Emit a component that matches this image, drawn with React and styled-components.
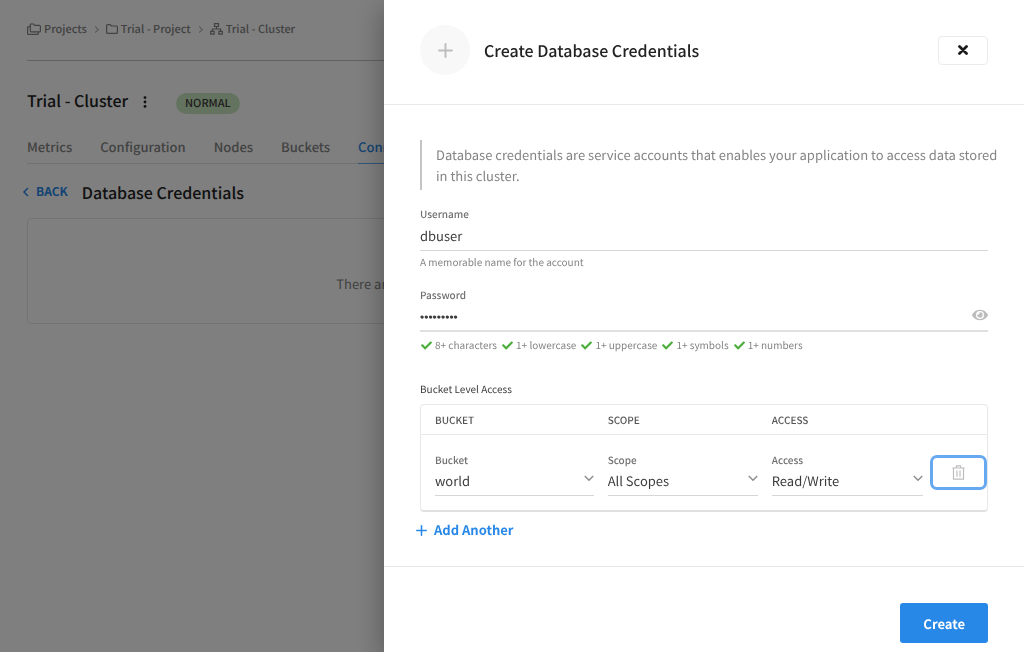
import { useState } from 'react';
import styled, { createGlobalStyle, ThemeProvider } from 'styled-components';
import { FaCheck, FaEye } from 'react-icons/fa';

const theme = {
  blue: '#2888e8',
  ring: '#67a9f0',
  green: '#4caf3c',
  heading: '#222222',
  text: '#3c3c3c',
  label: '#707070',
  muted: '#848484',
  line: '#e8e8e8',
  badge: '#c9e6bf',
}

const GlobalStyle = createGlobalStyle`
* {
  box-sizing: border-box;
}
body {
  margin: 0;
  background: #ffffff;
}
body, button, input, select {
  font-family: 'Noto Sans CJK SC', 'Open Sans', sans-serif;
  text-rendering: geometricPrecision;
}
`;

const ProjectsIcon = () => (
  <svg width="14" height="12" viewBox="0 0 14 12" fill="none" stroke="currentColor" strokeWidth="1.200" strokeLinejoin="round" aria-hidden="true">
    <path d="M3.5 1h3l1.2 1.3h4.6c.7 0 1.1.4 1.1 1v4.6c0 .6-.4 1-1 1H4.300c-.6 0-1-.4-1-1V1.600z" />
    <path d="M3.300 3.700H1.600c-.6 0-1 .4-1 1v5.700c0 .6.4 1 1 1h8.700c.6 0 1-.4 1-1V9" />
  </svg>
);

const FolderIcon = () => (
  <svg width="12" height="10" viewBox="0 0 12 10" fill="none" stroke="currentColor" strokeWidth="1.200" strokeLinejoin="round" aria-hidden="true">
    <path d="M.6 1.600c0-.6.4-1 1-1h2.600l1.300 1.400h4.900c.6 0 1 .4 1 1v5.400c0 .6-.4 1-1 1H1.600c-.6 0-1-.4-1-1z" />
  </svg>
);

const ClusterIcon = () => (
  <svg width="13" height="12" viewBox="0 0 13 12" fill="none" stroke="currentColor" strokeWidth="1.200" aria-hidden="true">
    <path d="M4.500.700h4v2.800h-4zM.700 8.400h3.400v2.700H.700zM8.900 8.400h3.400v2.700H8.900zM6.500 3.600v2.300M2.400 8.300V6h8.200v2.300" />
  </svg>
);

const Chevron = ({ dir, size = 10, weight = 1.5 }) => {
  const paths = { left: 'M7 1 3 5l4 4', right: 'M3.500 1.500 7 5 3.500 8.500', down: 'M.8 3 5 7.200 9.200 3' };
  return (
    <svg width={size} height={size} viewBox="0 0 10 10" fill="none" stroke="currentColor" strokeWidth={weight} aria-hidden="true">
      <path d={paths[dir]} />
    </svg>
  );
};

const PlusIcon = ({ size, weight }) => (
  <svg width={size} height={size} viewBox="0 0 14 14" fill="none" stroke="currentColor" strokeWidth={weight} strokeLinecap="round" aria-hidden="true">
    <path d="M7 1v12M1 7h12" />
  </svg>
);

const CloseIcon = () => (
  <svg width="10" height="10" viewBox="0 0 10 10" fill="none" stroke="currentColor" strokeWidth="2.800" strokeLinecap="round" aria-hidden="true">
    <path d="M1.500 1.500l7 7M8.500 1.500l-7 7" />
  </svg>
);

const TrashIcon = () => (
  <svg width="13" height="15" viewBox="0 0 13 15" fill="none" stroke="currentColor" strokeWidth="1.200" aria-hidden="true">
    <path d="M.300 3h12.400M4 2.800 4.600.900h3.800L9 2.800M1.500 3v11.200h10V3M5 5.500v6.200M8 5.500v6.200" />
  </svg>
);

const DotsIcon = () => (
  <svg width="4" height="12" viewBox="0 0 4 12" fill="currentColor" aria-hidden="true">
    <circle cx="2" cy="1.600" r="1.400" />
    <circle cx="2" cy="6" r="1.400" />
    <circle cx="2" cy="10.400" r="1.400" />
  </svg>
);

const Page = styled.main`
  min-height: 100vh;
  padding: 0 27px;
`;

const Breadcrumbs = styled.nav`
  display: flex;
  align-items: center;
  gap: 5px;
  height: 61px;
  padding-bottom: 2px;
  border-bottom: 1px solid #c4c4c4;
  color: #b0b0b0;

  a {
    display: flex;
    align-items: center;
    gap: 3px;
    color: ${props => props.theme.muted};
    font-size: 11px;
    font-weight: 500;
    line-height: 16px;
    text-decoration: none;
  }
`;

const ClusterHeader = styled.div`
  display: flex;
  align-items: center;
  gap: 15px;
  padding-top: 27px;

  h1 {
    margin: 0;
    padding-bottom: 3px;
    color: ${props => props.theme.heading};
    font-size: 16px;
    font-weight: 500;
    line-height: 24px;
  }
`;

const IconButton = styled.button`
  display: flex;
  padding: 0;
  border: 0;
  background: none;
  color: ${props => props.$color || props.theme.heading};
  cursor: pointer;
`;

const Badge = styled.span`
  margin: 3px 0 0 14px;
  padding: 0 9px;
  border-radius: 11px;
  background: ${props => props.theme.badge};
  color: ${props => props.theme.text};
  font-size: 11px;
  font-weight: 500;
  line-height: 21px;
`;

const Tabs = styled.nav`
  display: flex;
  gap: 28px;
  margin-top: 20px;
  border-bottom: 1px solid #e0e0e0;
`;

const Tab = styled.a`
  margin-bottom: -1px;
  padding-bottom: 4px;
  border-bottom: 1px solid ${props => props.$active ? props.theme.ring : 'transparent'};
  color: ${props => props.$active ? props.theme.blue : props.theme.muted};
  font-size: 13px;
  font-weight: 500;
  line-height: 24px;
  text-decoration: none;
`;

const SectionHeader = styled.div`
  display: flex;
  align-items: center;
  gap: 14px;
  margin: 16px 0 14px -6px;

  a {
    display: flex;
    align-items: center;
    gap: 5px;
    color: ${props => props.theme.blue};
    font-size: 12px;
    font-weight: 700;
    line-height: 24px;
    text-decoration: none;
  }
  h2 {
    margin: 0;
    color: ${props => props.theme.heading};
    font-size: 16px;
    font-weight: 500;
    line-height: 24px;
  }
`;

const EmptyCard = styled.p`
  margin: 0;
  padding: 52px 24px 26px;
  border: 1px solid #e6e6e6;
  border-radius: 4px;
  color: ${props => props.theme.muted};
  font-size: 13px;
  line-height: 26px;
  text-align: center;
`;

const Overlay = styled.div`
  position: fixed;
  inset: 0;
  display: flex;
  justify-content: flex-end;
  background: rgba(0, 0, 0, 0.5);
`;

const Drawer = styled.section`
  display: flex;
  flex-direction: column;
  width: 62.5%;
  min-width: 480px;
  overflow: hidden auto;
  background: #ffffff;
  box-shadow: 0 8px 28px rgba(0, 0, 0, 0.35);
`;

const DrawerHeader = styled.header`
  display: flex;
  align-items: center;
  gap: 14px;
  padding: 25px 36px 29px;
  border-bottom: 1px solid ${props => props.theme.line};

  h2 {
    flex: 1;
    margin: 0;
    color: ${props => props.theme.heading};
    font-size: 16px;
    font-weight: 500;
    line-height: 24px;
  }
`;

const Circle = styled.span`
  display: flex;
  align-items: center;
  justify-content: center;
  width: 50px;
  height: 50px;
  border-radius: 50%;
  background: #f8f8f8;
  color: #bdbdbd;
`;

const CloseButton = styled.button`
  display: flex;
  align-items: center;
  justify-content: center;
  width: 50px;
  height: 29px;
  padding: 0;
  border: 1px solid #ebebeb;
  border-radius: 4px;
  background: #ffffff;
  color: #1c1c1c;
  cursor: pointer;
`;

const Form = styled.form`
  display: flex;
  flex: 1;
  flex-direction: column;
`;

const FormBody = styled.div`
  flex: 1;
  padding: 35px 36px 24px;
`;

const Note = styled.p`
  margin: 0 -14px 16px 0;
  padding: 4px 0 4px 14px;
  border-left: 2px solid #c4c4c4;
  color: ${props => props.theme.muted};
  font-size: 13px;
  line-height: 21px;
`;

const Field = styled.div`
  margin-bottom: ${props => props.$gap || 0}px;
`;

const Label = styled.label`
  display: block;
  color: ${props => props.theme.label};
  font-size: 10px;
  font-weight: 500;
  line-height: 16px;
`;

const InputRow = styled.div`
  display: flex;
  align-items: center;
  height: 29px;
  padding-bottom: ${props => props.$thick ? 0 : 2}px;
  border-bottom: ${props => props.$thick ? 2 : 1}px solid ${props => props.$thick ? '#e0e0e0' : '#d6d6d6'};

  button {
    padding-bottom: 4px;
  }
`;

const Input = styled.input`
  flex: 1;
  min-width: 0;
  height: 24px;
  padding: 0;
  border: 0;
  outline: 0;
  background: none;
  color: ${props => props.theme.text};
  font-size: 13px;

  &[type='password'] {
    font-family: 'Liberation Sans', sans-serif;
    font-size: 12px;
  }
`;

const Hint = styled.p`
  margin: 3px 0 0;
  color: ${props => props.theme.muted};
  font-size: 10px;
  line-height: 16px;
`;

const Rules = styled.ul`
  display: flex;
  flex-wrap: wrap;
  gap: 5px;
  margin: 5px 0 28px;
  padding: 0 1px;
  list-style: none;
  color: ${props => props.theme.muted};
  font-size: 10px;
  line-height: 16px;

  li {
    display: flex;
    align-items: center;
    gap: 3px;
  }
  svg {
    color: ${props => props.theme.green};
  }
`;

const TableTitle = styled.h3`
  margin: 0 0 7px;
  color: ${props => props.theme.text};
  font-size: 10px;
  font-weight: 400;
  line-height: 16px;
`;

const AccessTable = styled.table`
  width: 100%;
  table-layout: fixed;
  border: 1px solid #e8e8e8;
  border-bottom: 2px solid #e0e0e0;
  border-radius: 4px;
  border-spacing: 0;

  th {
    height: 30px;
    padding: 0 0 0 14px;
    border-bottom: 1px solid ${props => props.theme.line};
    color: #555555;
    font-size: 10px;
    font-weight: 500;
    line-height: 16px;
    text-align: left;
    text-transform: uppercase;
  }
  td {
    padding: 17px 0 14px 14px;
    vertical-align: top;
  }
  td:last-child {
    padding: 20px 0 0 7px;
  }
`;

const SelectBox = styled.div`
  position: relative;
  border-bottom: 1px solid #d6d6d6;

  svg {
    position: absolute;
    top: 5px;
    right: 0;
    color: #8c8c8c;
    pointer-events: none;
  }
`;

const Select = styled.select`
  display: block;
  width: 100%;
  height: 27px;
  padding: 0 14px 2px 0;
  border: 0;
  outline: 0;
  appearance: none;
  background: none;
  color: ${props => props.theme.text};
  font-size: 13px;
`;

const DeleteButton = styled.button`
  display: flex;
  align-items: center;
  justify-content: center;
  width: 100%;
  height: 35px;
  padding: 0;
  border: 3px solid ${props => props.theme.ring};
  border-radius: 7px;
  background: #ffffff;
  color: #bdbdbd;
  cursor: pointer;
`;

const AddButton = styled.button`
  display: flex;
  align-items: center;
  gap: 7px;
  margin: 6px 0 0 -4px;
  padding: 0;
  border: 0;
  background: none;
  color: ${props => props.theme.blue};
  font-size: 13px;
  font-weight: 700;
  line-height: 24px;
  cursor: pointer;
`;

const DrawerFooter = styled.footer`
  display: flex;
  justify-content: flex-end;
  padding: 36px 36px 9px;
  border-top: 1px solid ${props => props.theme.line};
`;

const CreateButton = styled.button`
  height: 40px;
  padding: 0 23px;
  border: 0;
  border-radius: 3px;
  background: ${props => props.theme.blue};
  color: #ffffff;
  font-size: 13px;
  font-weight: 700;
  cursor: pointer;
`;

const tabs = ['Metrics', 'Configuration', 'Nodes', 'Buckets', 'Connect'];
const rules = ['8+ characters', '1+ lowercase', '1+ uppercase', '1+ symbols', '1+ numbers'];
const columns = [
  { name: 'Bucket', width: '30.5%', options: ['world'] },
  { name: 'Scope', width: '29%', options: ['All Scopes'] },
  { name: 'Access', options: ['Read/Write', 'Read', 'Write'] },
];

function App() {
  const [username, setUsername] = useState('dbuser');
  const [password, setPassword] = useState('Passw0rd!');
  const [visible, setVisible] = useState(false);

  return (
    <ThemeProvider theme={theme}>
      <GlobalStyle />
      <Page>
        <Breadcrumbs aria-label="Breadcrumb">
          <a href="#projects"><ProjectsIcon />Projects</a>
          <Chevron dir="right" size={9} weight={1.2} />
          <a href="#project"><FolderIcon />Trial - Project</a>
          <Chevron dir="right" size={9} weight={1.2} />
          <a href="#cluster"><ClusterIcon />Trial - Cluster</a>
        </Breadcrumbs>

        <ClusterHeader>
          <h1>Trial - Cluster</h1>
          <IconButton aria-label="Cluster menu"><DotsIcon /></IconButton>
          <Badge>NORMAL</Badge>
        </ClusterHeader>

        <Tabs>
          {tabs.map(tab => (
            <Tab key={tab} href={`#${tab.toLowerCase()}`} $active={tab === 'Connect'}>{tab}</Tab>
          ))}
        </Tabs>

        <SectionHeader>
          <a href="#connect"><Chevron dir="left" />BACK</a>
          <h2>Database Credentials</h2>
        </SectionHeader>
        <EmptyCard>There are no database credentials available for this cluster</EmptyCard>
      </Page>

      <Overlay>
        <Drawer role="dialog" aria-labelledby="drawer-title">
          <DrawerHeader>
            <Circle><PlusIcon size={15} weight={1.8} /></Circle>
            <h2 id="drawer-title">Create Database Credentials</h2>
            <CloseButton type="button" aria-label="Close"><CloseIcon /></CloseButton>
          </DrawerHeader>

          <Form onSubmit={e => e.preventDefault()}>
            <FormBody>
              <Note>
                Database credentials are service accounts that enables your application to access data stored in this cluster.
              </Note>

              <Field $gap={17}>
                <Label htmlFor="username">Username</Label>
                <InputRow>
                  <Input id="username" value={username} onChange={e => setUsername(e.target.value)} />
                </InputRow>
                <Hint>A memorable name for the account</Hint>
              </Field>

              <Field>
                <Label htmlFor="password">Password</Label>
                <InputRow $thick>
                  <Input
                    id="password"
                    type={visible ? 'text' : 'password'}
                    value={password}
                    onChange={e => setPassword(e.target.value)}
                  />
                  <IconButton type="button" $color="#bdbdbd" aria-label="Show password" onClick={() => setVisible(!visible)}>
                    <FaEye size={16} />
                  </IconButton>
                </InputRow>
                <Rules>
                  {rules.map(rule => <li key={rule}><FaCheck size={11} />{rule}</li>)}
                </Rules>
              </Field>

              <TableTitle>Bucket Level Access</TableTitle>
              <AccessTable>
                <colgroup>
                  {columns.map(col => <col key={col.name} width={col.width} />)}
                  <col width="64" />
                </colgroup>
                <thead>
                  <tr>
                    {columns.map(col => <th key={col.name} scope="col">{col.name}</th>)}
                    <th aria-label="Remove" />
                  </tr>
                </thead>
                <tbody>
                  <tr>
                    {columns.map(col => (
                      <td key={col.name}>
                        <Label htmlFor={`select-${col.name}`}>{col.name}</Label>
                        <SelectBox>
                          <Select id={`select-${col.name}`}>
                            {col.options.map(option => <option key={option}>{option}</option>)}
                          </Select>
                          <Chevron dir="down" weight={1.4} />
                        </SelectBox>
                      </td>
                    ))}
                    <td>
                      <DeleteButton type="button" aria-label="Remove bucket access"><TrashIcon /></DeleteButton>
                    </td>
                  </tr>
                </tbody>
              </AccessTable>
              <AddButton type="button"><PlusIcon size={11} weight={2} />Add Another</AddButton>
            </FormBody>

            <DrawerFooter>
              <CreateButton type="submit">Create</CreateButton>
            </DrawerFooter>
          </Form>
        </Drawer>
      </Overlay>
    </ThemeProvider>
  );
}

export default App;
